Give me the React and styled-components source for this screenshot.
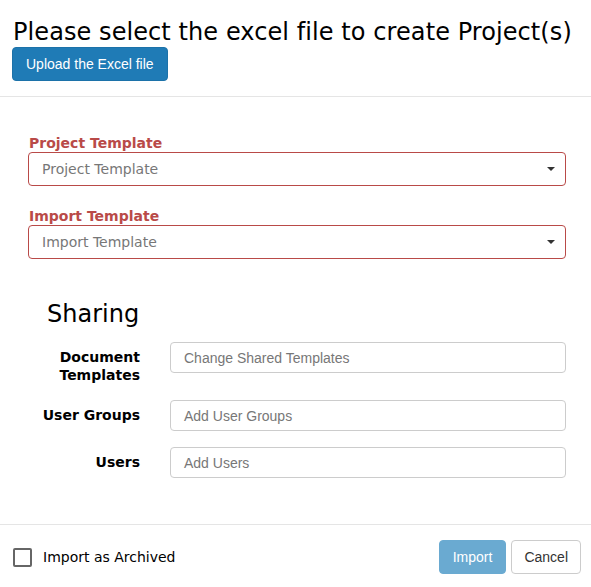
import React from "react";
import styled, { createGlobalStyle } from "styled-components";

const Global = createGlobalStyle`
  html, body { margin: 0; padding: 0; background: #fff; }
  body { font-family: "DejaVu Sans", Verdana, sans-serif; color: #000; }
  * { box-sizing: border-box; }
`;

const Modal = styled.div`
  width: 591px;
  min-height: 587px;
  display: flex;
  flex-direction: column;
  background: #fff;
`;

const Header = styled.div`
  padding: 18px 13px 15px 12px;
  border-bottom: 1px solid #e5e5e5;
  display: flex;
  flex-direction: column;
  align-items: flex-start;
  gap: 1px;
`;

const Title = styled.h1`
  margin: 0 0 0 1px;
  font-family: "DejaVu Sans", Verdana, sans-serif;
  font-weight: normal;
  font-size: 24px;
  line-height: 28px;
  letter-spacing: 0.08px;
  color: #000;
  white-space: nowrap;
`;

const Button = styled.button`
  height: 34px;
  padding: 0 ${(p) => p.$px || 12}px;
  border-radius: 4px;
  font-family: "Liberation Sans", Arial, sans-serif;
  font-size: 14px;
  cursor: pointer;
  border: 1px solid ${(p) => p.$border};
  background: ${(p) => p.$bg};
  color: ${(p) => p.$color};
`;

const Body = styled.div`
  padding: 38px 25px 0 28px;
  display: flex;
  flex-direction: column;
`;

const FieldGroup = styled.div`
  display: flex;
  flex-direction: column;
  gap: 1px;
  margin-bottom: ${(p) => p.$mb || 0}px;
`;

const ErrorLabel = styled.label`
  font-weight: bold;
  font-size: 14px;
  line-height: 16px;
  color: #b94a48;
  padding-left: 1px;
`;

const Select = styled.div`
  height: 34px;
  border: 1px solid #b94a48;
  border-radius: 4px;
  display: flex;
  align-items: center;
  justify-content: space-between;
  padding: 0 10px 0 13px;
  font-size: 14px;
  color: #777;
`;

const Caret = styled.span`
  width: 0;
  height: 0;
  border-left: 4px solid transparent;
  border-right: 4px solid transparent;
  border-top: 4px solid #333;
`;

const SectionTitle = styled.h2`
  margin: 0 0 14px 19px;
  font-weight: normal;
  font-size: 24px;
  line-height: 28px;
  color: #000;
`;

const ShareGrid = styled.div`
  display: grid;
  grid-template-columns: 112px 1fr;
  column-gap: 30px;
  row-gap: 16px;
`;

const RowLabel = styled.div`
  text-align: right;
  font-weight: bold;
  font-size: 14px;
  line-height: 18px;
  padding-top: 6px;
  color: #000;
`;

const Input = styled.div`
  height: 31px;
  border: 1px solid #ccc;
  border-radius: 4px;
  display: flex;
  align-items: center;
  padding: 0 13px;
  font-family: "Liberation Sans", Arial, sans-serif;
  font-size: 14px;
  color: #777;
`;

const Footer = styled.div`
  margin-top: auto;
  border-top: 1px solid #e5e5e5;
  padding: 15px 10px 13px 13px;
  display: flex;
  align-items: center;
  justify-content: space-between;
`;

const CheckRow = styled.label`
  display: flex;
  align-items: center;
  gap: 11px;
  font-size: 14px;
  color: #000;
`;

const Box = styled.span`
  width: 19px;
  height: 19px;
  border: 2px solid #666;
  border-radius: 2px;
  display: inline-block;
`;

const Actions = styled.div`
  display: flex;
  gap: 5px;
`;

export default function App() {
  return (
    <Modal>
      <Global />
      <Header>
        <Title>Please select the excel file to create Project(s)</Title>
        <Button $bg="#1f7bb6" $border="#1c72a9" $color="#fff" $px={13}>
          Upload the Excel file
        </Button>
      </Header>
      <Body>
        <FieldGroup $mb={22}>
          <ErrorLabel>Project Template</ErrorLabel>
          <Select>
            Project Template
            <Caret />
          </Select>
        </FieldGroup>
        <FieldGroup $mb={41}>
          <ErrorLabel>Import Template</ErrorLabel>
          <Select>
            Import Template
            <Caret />
          </Select>
        </FieldGroup>
        <SectionTitle>Sharing</SectionTitle>
        <ShareGrid>
          <RowLabel>
            Document
            <br />
            Templates
          </RowLabel>
          <Input>Change Shared Templates</Input>
          <RowLabel>User Groups</RowLabel>
          <Input>Add User Groups</Input>
          <RowLabel>Users</RowLabel>
          <Input>Add Users</Input>
        </ShareGrid>
      </Body>
      <Footer>
        <CheckRow>
          <Box />
          Import as Archived
        </CheckRow>
        <Actions>
          <Button $bg="#6aaad1" $border="#6aaad1" $color="#fff" $px={13}>
            Import
          </Button>
          <Button $bg="#fff" $border="#ccc" $color="#333">
            Cancel
          </Button>
        </Actions>
      </Footer>
    </Modal>
  );
}
